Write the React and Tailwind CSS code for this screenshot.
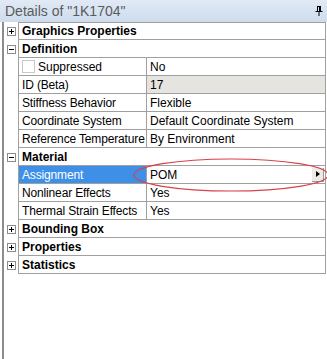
import React from 'react'

const font = { fontFamily: '"Liberation Sans", Arial, sans-serif' }

function Box({ open }) {
  return (
    <div className="w-[9px] h-[9px] border border-[#8c8c8c] bg-white flex items-center justify-center relative">
      <div className="absolute left-[1px] top-[3px] w-[5px] h-[1px] bg-black" />
      {!open && <div className="absolute left-[3px] top-[1px] w-[1px] h-[5px] bg-black" />}
    </div>
  )
}

function Category({ title, open, first }) {
  return (
    <div className="flex h-[18px]">
      <div className="w-[14px] flex items-center pl-[3px]">
        <Box open={open} />
      </div>
      <div className={`flex-1 border-l border-r border-b border-[#a0a0a0] ${first ? 'border-t' : ''} flex items-center pl-[3px] font-bold text-[12px] text-black whitespace-nowrap`}>
        {title}
      </div>
    </div>
  )
}

function Prop({ label, value, labelClass = '', valueClass = '', check, button }) {
  return (
    <div className="flex h-[18px]">
      <div className="w-[14px]" />
      <div className={`w-[129px] border-l border-r border-b border-[#a0a0a0] flex items-center text-[12px] whitespace-nowrap overflow-hidden ${labelClass}`}>
        {check ? (
          <>
            <div className="ml-[3px] w-[13px] h-[13px] shrink-0 border border-[#c8c8c8] bg-white" />
            <span className="ml-[3px]">{label}</span>
          </>
        ) : (
          <span className="pl-[3px] tracking-[-0.15px]">{label}</span>
        )}
      </div>
      <div className={`flex-1 border-r border-b border-[#a0a0a0] flex items-center justify-between text-[12px] text-black whitespace-nowrap ${valueClass}`}>
        <span className="pl-[3px]">{value}</span>
        {button && (
          <div className="w-[12px] h-[14px] mr-[1px] bg-[#ecebe8] border-r border-b border-[#9a9a9a] flex items-center justify-center">
            <svg width="4" height="6" viewBox="0 0 4 6"><path d="M0 0 L4 3 L0 6 Z" fill="#000" /></svg>
          </div>
        )}
      </div>
    </div>
  )
}

export default function App() {
  return (
    <div className="w-[327px] h-[359px] bg-white relative overflow-hidden" style={font}>
      {/* Header */}
      <div className="h-[22px] bg-gradient-to-b from-[#e1eaf5] to-[#cddced] flex items-center justify-between pl-[5px] pr-[4px]">
        <span className="text-[14px] text-[#5b5b5b]">Details of "1K1704"</span>
        <svg width="8" height="10" viewBox="0 0 8 10">
          <path d="M2 0.5 H6 M2.5 0.5 V5 M5.5 0.5 V5 M0.5 5.5 H7.5 M4 5.5 V10" stroke="#000" strokeWidth="1" fill="none" />
          <rect x="4" y="1" width="1" height="4" fill="#000" />
        </svg>
      </div>

      {/* Body */}
      <div className="ml-[2px] mr-[1px] border-l-2 border-[#8c8c8c] h-[337px]">
        <Category title="Graphics Properties" first />
        <Category title="Definition" open />
        <Prop label="Suppressed" value="No" check labelClass="text-black" />
        <Prop label="ID (Beta)" value="17" valueClass="bg-[#e6e4e0]" />
        <Prop label="Stiffness Behavior" value="Flexible" />
        <Prop label="Coordinate System" value="Default Coordinate System" />
        <Prop label="Reference Temperature" value="By Environment" />
        <Category title="Material" open />
        <Prop label="Assignment" value="POM" labelClass="bg-[#3d8fe8] text-white" button />
        <Prop label="Nonlinear Effects" value="Yes" />
        <Prop label="Thermal Strain Effects" value="Yes" />
        <Category title="Bounding Box" />
        <Category title="Properties" />
        <Category title="Statistics" />
      </div>

      {/* Red annotation ellipse */}
      <svg className="absolute left-0 top-0 pointer-events-none" width="327" height="359">
        <ellipse cx="231" cy="175" rx="97" ry="16" fill="none" stroke="#d8414a" strokeWidth="1.2" />
      </svg>
    </div>
  )
}
